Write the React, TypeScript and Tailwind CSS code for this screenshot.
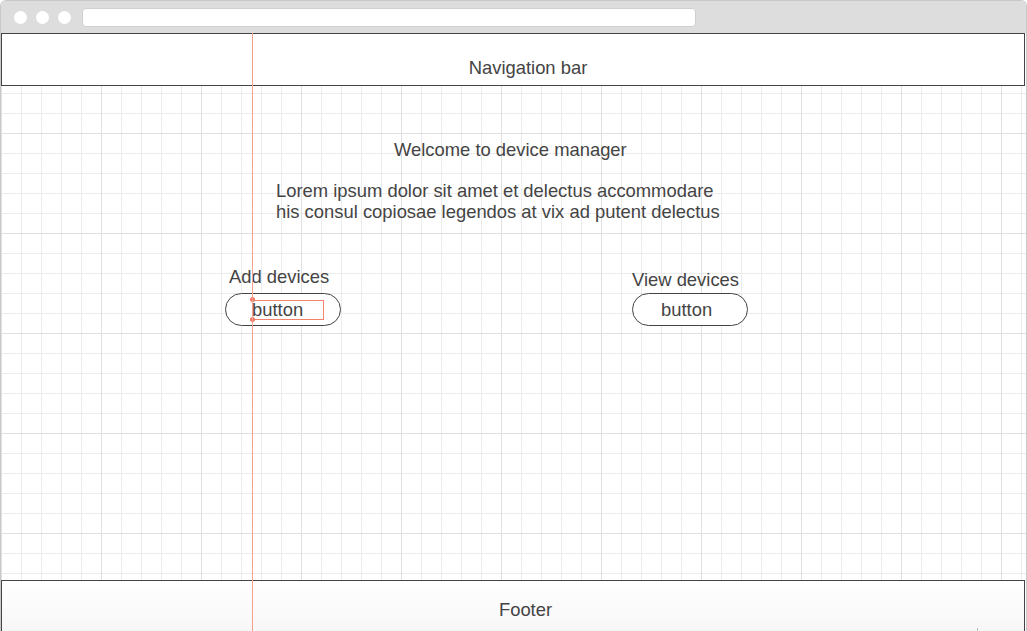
export default function App() {
  return (
    <div className="relative flex h-[631px] w-[1027px] flex-col overflow-hidden rounded-t-[6px] border border-b-0 border-[#c9c9c9] bg-white font-['Liberation_Sans',Arial,sans-serif] text-[18.4px] leading-[21px] text-[#444]">
      {/* browser chrome */}
      <div className="flex h-[32px] shrink-0 items-center bg-[#dddddd] pl-[13px]">
        <div className="flex gap-[9px]">
          <span className="h-[13px] w-[13px] rounded-full bg-white" />
          <span className="h-[13px] w-[13px] rounded-full bg-white" />
          <span className="h-[13px] w-[13px] rounded-full bg-white" />
        </div>
        <div className="ml-[11px] h-[19px] w-[614px] rounded-[4px] border border-[#cfcfcf] bg-white" />
      </div>

      {/* navigation */}
      <div className="mr-[1px] h-[53px] shrink-0 border border-[#444] bg-white pl-[30px] pt-[23px] text-center">
        Navigation bar
      </div>

      {/* main canvas */}
      <main className="flex-1 bg-white bg-[linear-gradient(to_right,#e0e0e0_1px,transparent_1px),linear-gradient(to_bottom,#e0e0e0_1px,transparent_1px),linear-gradient(to_right,#ececec_1px,transparent_1px),linear-gradient(to_bottom,#ececec_1px,transparent_1px)] bg-[length:100px_100px,100px_100px,20px_20px,20px_20px] bg-[position:0px_0px,0px_47px,0px_0px,0px_7px] pt-[53px]">
        <h1 className="ml-[393px] text-[18.4px] font-normal">Welcome to device manager</h1>
        <p className="ml-[275px] mt-[20px] w-[470px]">
          Lorem ipsum dolor sit amet et delectus accommodare
          <br />
          his consul copiosae legendos at vix ad putent delectus
        </p>

        <div className="mt-[44px] flex items-end">
          <div className="relative ml-[224px] flex flex-col">
            <span className="mb-[6px] pl-[4px]">Add devices</span>
            <button className="h-[33px] w-[116px] rounded-full border border-[#444] bg-white pl-[26px] text-left">
              button
            </button>
            {/* selection box on the button label */}
            <span className="pointer-events-none absolute bottom-[6px] left-[27px] h-[20px] w-[72px] ring-1 ring-inset ring-[#f4836e]" />
            <span className="absolute bottom-[24px] left-[25px] h-[5px] w-[5px] rounded-full bg-[#f07a64]" />
            <span className="absolute bottom-[4px] left-[25px] h-[5px] w-[5px] rounded-full bg-[#f07a64]" />
          </div>
          <div className="ml-[291px] flex flex-col">
            <span className="mb-[3px]">View devices</span>
            <button className="h-[33px] w-[116px] rounded-full border border-[#444] bg-white pl-[28px] text-left">
              button
            </button>
          </div>
        </div>
      </main>

      {/* footer */}
      <footer className="relative mr-[1px] h-[51px] shrink-0 border border-b-0 border-[#444] bg-gradient-to-b from-white to-[#f7f7f7] pl-[25px] pt-[18px] text-center">
        Footer
        <span className="absolute left-[975px] top-[47px] h-[4px] w-px bg-[#bbb]" />
      </footer>

      {/* selection guide */}
      <div className="absolute left-[251px] top-[32px] h-[600px] w-px bg-[#f7a090]" />
    </div>
  );
}
